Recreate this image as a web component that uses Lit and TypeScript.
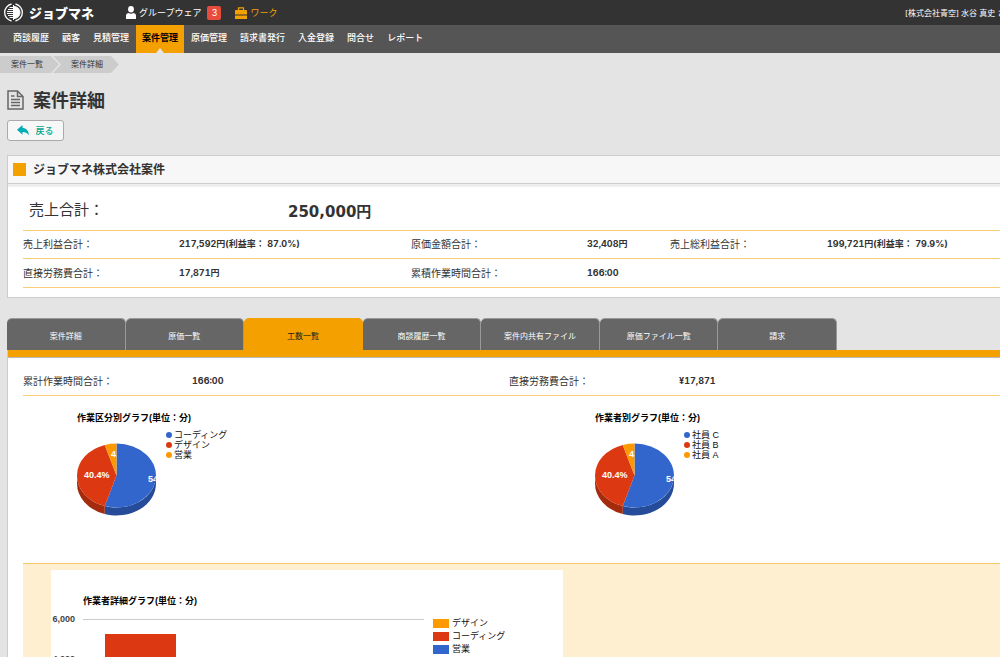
import { LitElement, html, svg, css } from "lit";
import { customElement, property } from "lit/decorators.js";
import { classMap } from "lit/directives/class-map.js";

interface Slice {
  name: string;
  share: number;
  color: string;
  side: string;
}

/** Tilted pie with a solid rim, a title and a legend at its right. */
@customElement("pie-chart")
export class PieChart extends LitElement {
  @property() heading = "";
  @property({ attribute: false }) slices: Slice[] = [];

  static styles = css`
    :host { display: block; }
    svg { display: block; overflow: visible; }
    text { font: 9px "Liberation Sans", "Noto Sans CJK JP", sans-serif; fill: #111; }
    .title { font-weight: bold; fill: #000; }
    .share { font-weight: bold; fill: #fff; }
  `;

  private point(turn: number, scale = 1): [number, number] {
    const a = turn * 2 * Math.PI;
    return [93.5 + 39.5 * scale * Math.sin(a), 79.5 - 32 * scale * Math.cos(a)];
  }

  render() {
    let turn = 0;
    const parts = this.slices.map((s, i) => {
      const from = turn;
      const to = (turn += s.share / 100);
      const [x1, y1] = this.point(from);
      const [x2, y2] = this.point(to);
      const large = to - from > 0.5 ? 1 : 0;
      const top = `M93.5 79.5L${x1} ${y1}A39.5 32 0 ${large} 1 ${x2} ${y2}Z`;
      // Only the front half of the rim is visible.
      const rimFrom = Math.max(from, 0.25);
      const rimTo = Math.min(to, 0.75);
      const [rx1, ry1] = this.point(rimFrom);
      const [rx2, ry2] = this.point(rimTo);
      const rim =
        rimTo > rimFrom
          ? `M${rx1} ${ry1}A39.5 32 0 0 1 ${rx2} ${ry2}v8A39.5 32 0 0 0 ${rx1} ${ry1 + 8}Z`
          : "";
      const spots = [[125, 86], [61, 82], [88, 61]];
      const [lx, ly] = spots[i];
      return svg`
        <clipPath id="slice${i}"><path d=${top} /></clipPath>
        <path d=${rim} fill=${s.side} />
        <path d=${top} fill=${s.color} />
        <g clip-path="url(#slice${i})"><text class="share" x=${lx} y=${ly}>${s.share}%</text></g>
        <circle cx="146" cy=${39 + i * 10} r="3" fill=${s.color} />
        <text x="151" y=${42 + i * 10}>${s.name}</text>`;
    });
    return html`<svg width="260" height="140" role="img" aria-label=${this.heading}>
      <text class="title" x="54" y="25">${this.heading}</text>
      ${parts}
    </svg>`;
  }
}

@customElement("app-root")
export class AppRoot extends LitElement {
  private nav = ["商談履歴", "顧客", "見積管理", "案件管理", "原価管理", "請求書発行", "入金登録", "問合せ", "レポート"];
  private tabs = ["案件詳細", "原価一覧", "工数一覧", "商談履歴一覧", "案件内共有ファイル", "原価ファイル一覧", "請求"];

  private slices(names: string[]): Slice[] {
    const shares = [54.8, 40.4, 4.8];
    const colors = ["#3366cc", "#dc3912", "#ff9900"];
    const sides = ["#264c99", "#a52b0e", "#bf7300"];
    return names.map((name, i) => ({ name, share: shares[i], color: colors[i], side: sides[i] }));
  }

  static styles = css`
    :host {
      display: block;
      height: 100vh;
      overflow: hidden;
      background: #e4e4e4;
      color: #333;
      font: 10px/16px Inter, "Noto Sans CJK JP", sans-serif;
    }
    * { box-sizing: border-box; }
    a { color: inherit; text-decoration: none; }
    h1, h2, dl, dd, ol, ul { margin: 0; padding: 0; }
    ol, ul { list-style: none; }
    svg { display: block; flex: none; }

    .top {
      display: flex;
      align-items: center;
      height: 25px;
      padding-left: 4px;
      background: #333;
      color: #fff;
      font-size: 9px;
      white-space: nowrap;
      overflow: hidden;
    }
    .logo { display: flex; align-items: center; gap: 6px; width: 122px; font-size: 13px; font-weight: 900; }
    .link { display: flex; align-items: center; gap: 3px; }
    .work { margin-left: 14px; color: #f4a000; }
    .badge {
      width: 14px;
      margin-left: 6px;
      border-radius: 2px;
      background: #e74c3c;
      line-height: 14px;
      text-align: center;
    }
    .user { width: 95px; margin-left: auto; overflow: hidden; font-size: 8px; }

    .nav {
      display: flex;
      gap: 1px;
      height: 28px;
      padding-left: 7px;
      background: #555;
      color: #fff;
      font-size: 9px;
      font-weight: 500;
      line-height: 26px;
      white-space: nowrap;
    }
    .nav a { padding: 0 6px; }
    .nav .on {
      position: relative;
      background: #f4a000;
      color: #000;
      font-weight: bold;
    }
    .nav .on::after {
      content: "";
      position: absolute;
      bottom: 0;
      left: 50%;
      margin-left: -4px;
      border: 4px solid transparent;
      border-top: 0;
      border-bottom: 5px solid #e4e4e4;
    }

    .crumbs { display: flex; padding-top: 3px; font-size: 8px; line-height: 17px; }
    .crumbs a {
      display: block;
      width: 59px;
      padding-left: 11px;
      background: #ccc;
      clip-path: polygon(0 0, 51px 0, 100% 50%, 51px 100%, 0 100%);
    }
    .crumbs li + li a {
      width: 66px;
      margin-left: -6px;
      padding-left: 18px;
      clip-path: polygon(0 0, 58px 0, 100% 50%, 58px 100%, 0 100%, 8px 50%);
    }

    main { padding-left: 7px; }
    .heading { display: flex; align-items: center; gap: 9px; margin-top: 14px; }
    h1 { padding-top: 2px; font-size: 18px; line-height: 24px; }
    .back {
      display: flex;
      align-items: center;
      justify-content: center;
      gap: 6px;
      width: 57px;
      height: 21px;
      margin-top: 7px;
      padding: 0;
      border: 1px solid #aaa;
      border-radius: 3px;
      background: #f7f7f7;
      color: #00a890;
      font: 500 9px "Noto Sans CJK JP", sans-serif;
    }

    .panel { margin-top: 14px; border: 1px solid #ccc; border-right: 0; background: #fff; }
    .bar {
      display: flex;
      align-items: center;
      gap: 7px;
      height: 28px;
      padding-left: 5px;
      background: #f7f7f7;
      border-bottom: 1px solid #ccc;
    }
    .square { width: 13px; height: 13px; background: #f4a000; }
    h2 { font-size: 12px; line-height: 16px; }
    .summary { padding: 0 0 9px 15px; border-top: 3px solid #eee; }
    .row {
      display: grid;
      grid-template-columns: 156fr 232fr 176fr 83fr 157fr 173fr;
      align-items: center;
      height: 29px;
      border-bottom: 1px solid #f8cc78;
      white-space: nowrap;
    }
    .row dd { font-size: 9px; font-weight: bold; font-variant-numeric: tabular-nums; }
    .total {
      grid-template-columns: 259fr 712fr;
      height: 44px;
      padding: 3px 0 0 6px;
      font-size: 15px;
    }
    .total dd { font: bold 15px "DejaVu Sans", "Noto Sans CJK JP", sans-serif; }
    .short { height: 28px; padding-bottom: 2px; }
    .hours { grid-template-columns: 169fr 317fr 170fr 321fr; height: 38px; padding-top: 8px; }

    .tabs { display: flex; max-width: 830px; margin-top: 20px; }
    .tabs button {
      flex: 1;
      height: 32px;
      padding: 1px 0 0;
      border: 1px solid #999;
      border-width: 1px 1px 0 0;
      border-radius: 5px 5px 0 0;
      background: #666;
      color: #fff;
      font: 8px "Noto Sans CJK JP", sans-serif;
      white-space: nowrap;
    }
    .tabs .on { border-color: #f4a000; background: #f4a000; color: #222; }
    .sheet { border-left: 1px solid #ccc; background: #fff; }
    .stripe { height: 8px; background: #f4a000; border-bottom: 1px solid #bbb; }
    .body { padding-left: 15px; }
    .pies { display: grid; grid-template-columns: 53% 1fr; height: 167px; }
    .detail { padding: 6px 0 0 28px; border-top: 1px solid #f5c66a; background: #feefd0; }
    .card { width: 512px; background: #fff; }
    .card text { font: 9px "Liberation Sans", "Noto Sans CJK JP", sans-serif; fill: #111; }
    .card .title { font-weight: bold; fill: #000; }
    .card .axis { font-weight: bold; fill: #444; }
  `;

  render() {
    const series = [["デザイン", "#ff9900"], ["コーディング", "#dc3912"], ["営業", "#3366cc"]];
    return html`
      <header class="top">
        <a class="logo" href="#">
          <svg width="19" height="19" viewBox="0 0 19 19" fill="none" stroke="#fff">
            <path d="M7.500 1A8.700 8.700 0 0 0 7.500 18M11.500 1A8.700 8.700 0 0 1 11.500 18" stroke-width="1.300" />
            <path d="M10 3.500A6 6 0 0 1 10 15.500Z" fill="#fff" />
            <path d="M5.500 4.500h4M4 6.500h5.500M3 8.500h6.500M3 10.500h6.500M4 12.500h5.500M5.500 14.500h4" />
            <path d="M9.500 2v15" />
          </svg>
          ジョブマネ
        </a>
        <a class="link" href="#">
          <svg width="10" height="13" viewBox="0 0 10 13" fill="#fff">
            <ellipse cx="5" cy="3.300" rx="2.900" ry="3.300" />
            <path d="M0 13V9.500Q0 7.200 2.500 7Q5 8.500 7.500 7Q10 7.200 10 9.500V13Z" />
          </svg>
          グループウェア
        </a>
        <span class="badge">3</span>
        <a class="link work" href="#">
          <svg width="12" height="12" viewBox="0 0 12 12" fill="#f4a000">
            <path d="M3.500 3V.8h5V3" fill="none" stroke="#f4a000" stroke-width="1.200" />
            <path d="M1 3h10q1 0 1 1v3.500H0V4q0-1 1-1ZM0 8.500h12V12H0Z" />
          </svg>
          ワーク
        </a>
        <span class="user">[株式会社青空] 水谷 真史 さん</span>
      </header>
      <nav class="nav">
        ${this.nav.map((n) => html`<a href="#" class=${classMap({ on: n === "案件管理" })}>${n}</a>`)}
      </nav>
      <ol class="crumbs">
        <li><a href="#">案件一覧</a></li>
        <li><a href="#">案件詳細</a></li>
      </ol>
      <main>
        <div class="heading">
          <svg width="17" height="20" viewBox="0 0 17 20" fill="none" stroke="#666" stroke-width="1.500">
            <path d="M1 1h9.500L16 6.500V19H1Z" />
            <path d="M10.500 1v5.500H16M4 6h3.500M4 9.500h9M4 12.500h9M4 15.500h9" />
          </svg>
          <h1>案件詳細</h1>
        </div>
        <button class="back">
          <svg width="12" height="11" viewBox="0 0 12 11" fill="#00adb5">
            <path d="M0 4.800L5.500 0V2.800Q11.500 3.200 12 10.500Q9.800 6.800 5.500 7V9.800Z" />
          </svg>
          戻る
        </button>
        <section class="panel">
          <div class="bar"><span class="square"></span><h2>ジョブマネ株式会社案件</h2></div>
          <div class="summary">
            <dl class="row total"><dt>売上合計：</dt><dd>250,000円</dd></dl>
            <dl class="row short">
              <dt>売上利益合計：</dt><dd>217,592円(利益率： 87.0%)</dd>
              <dt>原価金額合計：</dt><dd>32,408円</dd>
              <dt>売上総利益合計：</dt><dd>199,721円(利益率： 79.9%)</dd>
            </dl>
            <dl class="row">
              <dt>直接労務費合計：</dt><dd>17,871円</dd>
              <dt>累積作業時間合計：</dt><dd>166:00</dd>
            </dl>
          </div>
        </section>
        <div class="tabs" role="tablist">
          ${this.tabs.map((t) => html`<button role="tab" class=${classMap({ on: t === "工数一覧" })}>${t}</button>`)}
        </div>
        <section class="sheet">
          <div class="stripe"></div>
          <div class="body">
            <dl class="row hours">
              <dt>累計作業時間合計：</dt><dd>166:00</dd>
              <dt>直接労務費合計：</dt><dd>¥17,871</dd>
            </dl>
            <div class="pies">
              <pie-chart heading="作業区分別グラフ(単位：分)" .slices=${this.slices(["コーディング", "デザイン", "営業"])}></pie-chart>
              <pie-chart heading="作業者別グラフ(単位：分)" .slices=${this.slices(["社員 C", "社員 B", "社員 A"])}></pie-chart>
            </div>
            <div class="detail">
              <div class="card">
                <svg width="512" height="240" role="img" aria-label="作業者詳細グラフ">
                  <text class="title" x="32" y="34">作業者詳細グラフ(単位：分)</text>
                  <path d="M32 49.500H373M32 89.500H373" stroke="#ccc" />
                  <text class="axis" x="24" y="52" text-anchor="end">6,000</text>
                  <text class="axis" x="24" y="92" text-anchor="end">4,000</text>
                  <rect x="54" y="64" width="71" height="176" fill="#dc3912" />
                  ${series.map(([name, color], i) => svg`
                    <rect x="382" y=${49 + i * 13} width="16" height="9" fill=${color} />
                    <text x="401" y=${56 + i * 13}>${name}</text>`)}
                </svg>
              </div>
            </div>
          </div>
        </section>
      </main>
    `;
  }
}
